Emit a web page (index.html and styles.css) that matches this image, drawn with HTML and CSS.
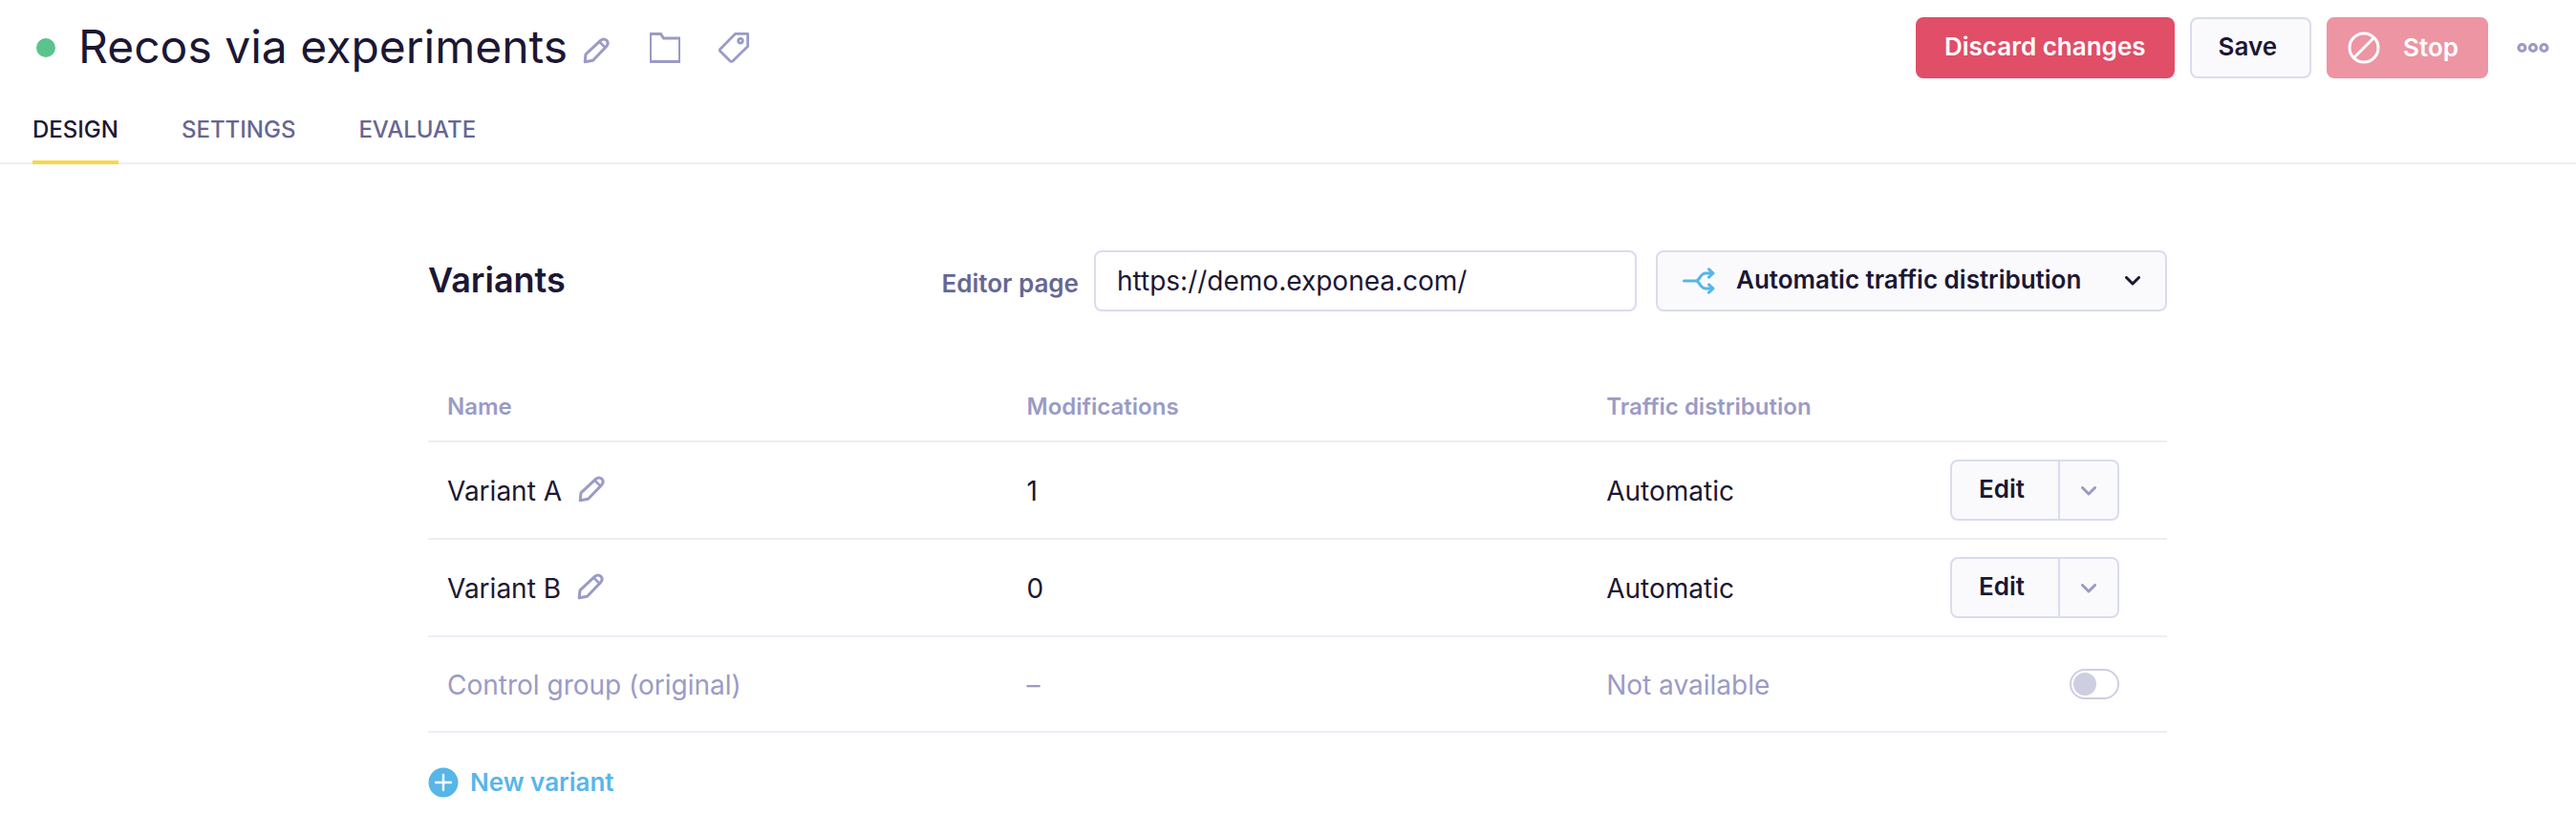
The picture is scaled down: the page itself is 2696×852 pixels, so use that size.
FILE: index.html
```html
<!DOCTYPE html>
<html lang="en">
<head>
<meta charset="utf-8">
<title>Recos via experiments</title>
<link rel="stylesheet" href="styles.css">
</head>
<body>
<svg class="sprite" aria-hidden="true">
  <symbol id="pencil" viewBox="0 0 28 28"><g fill="none" stroke="currentColor" stroke-width="3" stroke-linejoin="round"><path d="M2.200 25.800 3 17.800 18.800 3.200Q22 .8 25 3.400Q27.400 6.200 24.800 9.400L10.600 24.200Z"/><path d="M17.400 4.800 23.300 10.600" stroke-width="2.600"/></g></symbol>
  <symbol id="chevron" viewBox="0 0 16 10"><path d="M1.500 1.500 8 8 14.500 1.500" fill="none" stroke="currentColor" stroke-width="3" stroke-linecap="round" stroke-linejoin="round"/></symbol>
</svg>
<header class="topbar">
  <div class="title-group">
    <span class="status"></span>
    <h1 class="title">Recos via experiments</h1>
    <button class="icon-button rename" type="button" aria-label="Rename"><svg class="pencil-icon"><use href="#pencil"/></svg></button>
    <button class="icon-button" type="button" aria-label="Folder"><svg width="32" height="32" viewBox="0 0 32 32" fill="none" stroke="currentColor" stroke-width="2"><path d="M1 1V31M31 6V31"/><path d="M0 1.500H11.500L14.500 6H32M0 30.500H32" stroke-width="3"/></svg></button>
    <button class="icon-button" type="button" aria-label="Tags"><svg width="32" height="32" viewBox="0 0 32 32" fill="none" stroke="currentColor" stroke-width="2.800" stroke-linejoin="round"><path d="M17.500 1.400H30.600V14.500L14.800 30Q13.500 31 12.200 30L1.700 19.600Q.9 18.500 1.700 17.400Z"/><circle cx="23" cy="8.700" r="2.300" stroke-width="2.800"/></svg></button>
  </div>
  <div class="actions">
    <button class="button danger" type="button">Discard changes</button>
    <button class="button save" type="button">Save</button>
    <button class="button danger stop" type="button" disabled><svg width="34" height="34" viewBox="0 0 34 34" fill="none" stroke="currentColor" stroke-width="3"><circle cx="17" cy="17" r="15"/><path d="M6.500 27.500 27.500 6.500"/></svg>Stop</button>
    <button class="icon-button more" type="button" aria-label="More"><svg width="34" height="12" viewBox="0 0 34 12" fill="none" stroke="currentColor" stroke-width="3.200"><circle cx="5.500" cy="6" r="3.500"/><circle cx="17" cy="6" r="3.500"/><circle cx="28.500" cy="6" r="3.500"/></svg></button>
  </div>
</header>
<nav class="tabs">
  <a class="tab active" href="#design">DESIGN</a>
  <a class="tab" href="#settings">SETTINGS</a>
  <a class="tab" href="#evaluate">EVALUATE</a>
</nav>
<main class="content">
  <div class="toolbar">
    <h2 class="heading">Variants</h2>
    <label class="field-label" for="page">Editor page</label>
    <input class="field" id="page" type="text" value="https://demo.exponea.com/">
    <div class="picker">
      <select class="select" aria-label="Traffic distribution mode"><option>Automatic traffic distribution</option></select>
      <svg class="split-icon" width="34" height="28" viewBox="0 0 34 28" fill="none" stroke="currentColor" stroke-width="3" stroke-linecap="round" stroke-linejoin="round"><path d="M1.500 14H14C18 14 18 6 24 6H32M14 14C18 14 18 22 24 22H32M27.500 1.800 32 6 27.500 10.200M27.500 17.800 32 22 27.500 26.200"/></svg>
      <svg class="chevron picker-chevron"><use href="#chevron"/></svg>
    </div>
  </div>
  <table class="table">
    <thead>
      <tr><th>Name</th><th>Modifications</th><th>Traffic distribution</th><th class="controls" aria-label="Actions"></th></tr>
    </thead>
    <tbody>
      <tr>
        <td><span class="name">Variant A<button class="icon-button" type="button" aria-label="Rename Variant A"><svg class="pencil-icon"><use href="#pencil"/></svg></button></span></td>
        <td>1</td><td>Automatic</td>
        <td class="controls"><div class="split"><button class="split-main" type="button">Edit</button><button class="split-more" type="button" aria-label="More for Variant A"><svg class="chevron"><use href="#chevron"/></svg></button></div></td>
      </tr>
      <tr>
        <td><span class="name">Variant B<button class="icon-button" type="button" aria-label="Rename Variant B"><svg class="pencil-icon"><use href="#pencil"/></svg></button></span></td>
        <td>0</td><td>Automatic</td>
        <td class="controls"><div class="split"><button class="split-main" type="button">Edit</button><button class="split-more" type="button" aria-label="More for Variant B"><svg class="chevron"><use href="#chevron"/></svg></button></div></td>
      </tr>
      <tr class="muted">
        <td>Control group (original)</td><td>–</td><td>Not available</td>
        <td class="controls"><input class="toggle" type="checkbox" aria-label="Enable control group"></td>
      </tr>
    </tbody>
  </table>
  <button class="add" type="button"><svg width="32" height="32" viewBox="0 0 32 32"><circle cx="16" cy="16" r="15.500" fill="currentColor"/><path d="M16 8V24M8 16H24" stroke="#fff" stroke-width="2.400" stroke-linecap="round"/></svg>New variant</button>
</main>
</body>
</html>
```
FILE: styles.css
```css
* { box-sizing: border-box; }
body {
  margin: 0;
  background: #fff;
  color: #1c1733;
  font: 400 28px/36px Inter, "Liberation Sans", sans-serif;
}
button, input, select { font: inherit; color: inherit; margin: 0; }
button { cursor: pointer; }
svg { display: block; flex: none; }
.sprite { position: absolute; width: 0; height: 0; }

.topbar {
  display: flex;
  justify-content: space-between;
  align-items: center;
  height: 100px;
  padding: 0 28px 0 38px;
}
.title-group, .actions { display: flex; align-items: center; }
.title-group { gap: 40px; }
.status { width: 20px; height: 20px; margin-right: -16px; border-radius: 50%; background: #5bc48c; }
.title { margin: 0; padding-bottom: 2px; font-size: 48px; line-height: 60px; font-weight: 400; }
.icon-button { display: flex; padding: 0; border: 0; background: none; color: #9a9bc6; }
.rename { margin-left: -24px; margin-right: 2px; padding-top: 6px; }
.pencil-icon { width: 28px; height: 28px; }
.actions { gap: 16px; }
.button {
  display: flex;
  align-items: center;
  height: 64px;
  padding: 0 28px 2px;
  border: 2px solid #d9dcef;
  border-radius: 8px;
  background: #fafafd;
  font-size: 26px;
  font-weight: 600;
}
.save { padding: 0 34px 2px 28px; }
.danger { border-color: #e04e67; background: #e04e67; color: #fff; }
.stop { gap: 24px; padding: 0 29px 0 20px; border-color: #ed95a3; background: #ed95a3; }
.more { margin-left: 14px; }

.tabs {
  display: flex;
  gap: 66px;
  height: 72px;
  padding: 0 34px;
  border-bottom: 2px solid #ededf6;
}
.tab {
  height: 72px;
  padding-top: 18px;
  border-bottom: 4px solid transparent;
  color: #666694;
  font-size: 24px;
  font-weight: 500;
  text-decoration: none;
}
.active { border-color: #fbd743; color: #1c1733; }

.content { padding: 90px 428px 0 448px; }
.toolbar { display: flex; align-items: center; }
.heading { margin: 0 auto 0 0; padding-bottom: 2px; font-size: 36px; line-height: 48px; font-weight: 600; }
.field-label { margin-right: 16px; padding-top: 6px; color: #666694; font-size: 26px; font-weight: 600; }
.field {
  width: 568px;
  height: 64px;
  padding: 0 22px;
  border: 2px solid #d9dcef;
  border-radius: 8px;
  background: #fff;
}
.picker { display: grid; align-items: center; width: 535px; margin-left: 20px; }
.picker > * { grid-area: 1 / 1; }
.select {
  appearance: none;
  width: 100%;
  height: 64px;
  padding: 0 60px 2px 82px;
  border: 2px solid #d9dcef;
  border-radius: 8px;
  background: #fafafd;
  font-size: 26px;
  font-weight: 600;
}
.split-icon { margin-left: 28px; color: #57b6e8; pointer-events: none; }
.chevron { width: 16px; height: 10px; }
.picker-chevron { justify-self: end; margin-right: 28px; pointer-events: none; }

.table { width: 100%; margin-top: 64px; border-collapse: collapse; table-layout: fixed; }
.table th, .table td { padding: 0 20px; border-bottom: 2px solid #ededf6; text-align: left; }
.table th { width: 33.33%; height: 72px; color: #9a9bc6; font-size: 24px; font-weight: 600; }
.table td { height: 102px; padding-top: 2px; }
.table .controls { width: 248px; padding: 0 50px 0 0; }
.table th:nth-child(3) { width: calc(33.33% - 248px); }
.name { display: flex; align-items: center; gap: 17px; }
.name .icon-button { padding-bottom: 4px; }
.muted { color: #9a9bc6; }
.table .muted td { height: 100px; }
.split {
  display: flex;
  width: 177px;
  height: 64px;
  margin-left: auto;
  border: 2px solid #d9dcef;
  border-radius: 8px;
  background: #fafafd;
}
.split-main, .split-more { padding: 0; border: 0; background: none; }
.split-main { flex: 1; padding: 0 32px 2px 28px; font-size: 26px; font-weight: 600; text-align: left; }
.split-more { display: grid; place-items: center; width: 62px; padding-top: 2px; border-left: 2px solid #d9dcef; color: #9a9bc6; }
.toggle {
  appearance: none;
  display: block;
  width: 52px;
  height: 32px;
  margin-left: auto;
  padding: 2px;
  border: 2px solid #cdcfe1;
  border-radius: 16px;
}
.toggle::before { content: ""; display: block; width: 24px; height: 24px; border-radius: 50%; background: #cdcfe1; }
.toggle:checked::before { margin-left: auto; }
.add {
  display: flex;
  align-items: center;
  gap: 12px;
  margin-top: 36px;
  padding: 0;
  border: 0;
  background: none;
  color: #57b6e8;
  font-size: 26px;
  line-height: 32px;
  font-weight: 600;
}
```
